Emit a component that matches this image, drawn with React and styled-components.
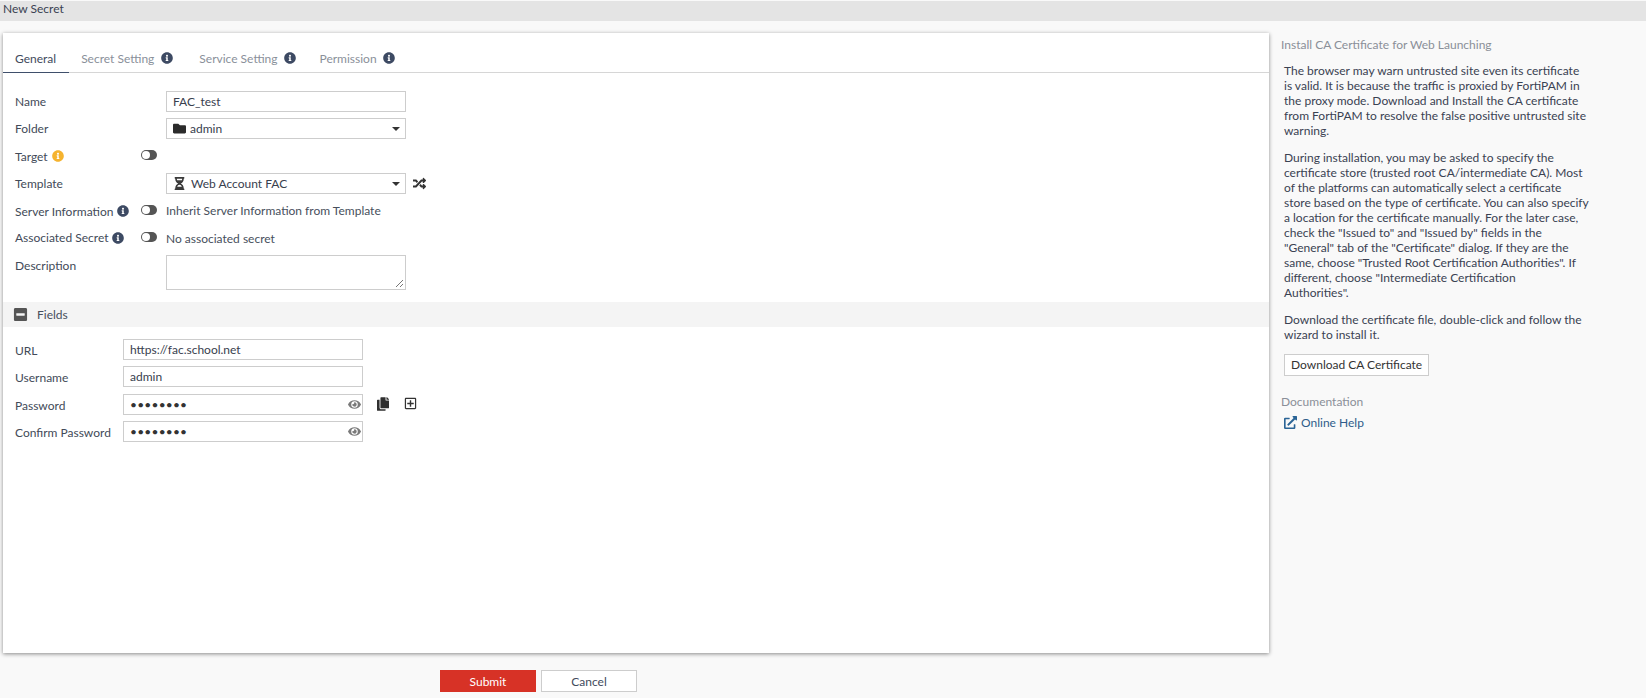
import React from 'react';
import styled, { createGlobalStyle } from 'styled-components';
import {
  FaInfoCircle,
  FaFolder,
  FaHourglassHalf,
  FaRandom,
  FaEye,
  FaCopy,
  FaRegPlusSquare,
  FaMinusSquare,
  FaExternalLinkAlt,
} from 'react-icons/fa';

const GlobalStyle = createGlobalStyle`
  html, body {
    margin: 0;
    padding: 0;
    background: #f9f9f9;
  }
  body {
    font-family: Lato, "Open Sans", sans-serif;
    font-size: 12px;
    color: #303a4b;
  }
`;

const Page = styled.div`
  width: 1646px;
  height: 698px;
  overflow: hidden;
  display: flex;
  flex-direction: column;
`;

const TitleBar = styled.div`
  height: 20px;
  margin-top: 1px;
  padding-left: 3px;
  background: #e4e4e4;
  line-height: 15px;
  color: #3a4252;
  box-sizing: border-box;
`;

const Body = styled.div`
  display: flex;
  padding: 12px 0 0 3px;
`;

const MainColumn = styled.div`
  width: 1266px;
  flex: none;
`;

const Card = styled.div`
  height: 620px;
  background: #fff;
  box-shadow: 0 1px 4px rgba(0, 0, 0, 0.45);
  padding-top: 8px;
  box-sizing: border-box;
`;

const Tabs = styled.div`
  display: flex;
  height: 31px;
  border-bottom: 1px solid #d6d6d6;
  margin-bottom: 18px;
`;

const Tab = styled.div`
  display: flex;
  align-items: center;
  gap: ${p => p.$gap || 6}px;
  height: 32px;
  padding: 2px 12px 0;
  margin-right: ${p => p.$after || 0}px;
  box-sizing: border-box;
  color: #8a909a;
`;

const ActiveTab = styled(Tab)`
  padding-right: 13px;
  color: #3f4a5c;
  box-shadow: inset 0 -1px 0 #3f4f6b;
`;

const InfoIcon = styled(FaInfoCircle)`
  width: 12px;
  height: 12px;
  flex: none;
  color: ${p => p.$color || '#3d4a63'};
`;

const Form = styled.div`
  padding-left: 12px;
`;

const Row = styled.div`
  display: flex;
  height: ${p => p.$height || 27}px;
  align-items: flex-start;
`;

const Label = styled.div`
  width: ${p => p.$width || 126}px;
  flex: none;
  display: flex;
  align-items: center;
  gap: 4px;
  height: 20px;
  padding-top: ${p => p.$top ?? 2}px;
  box-sizing: border-box;
  color: #424a58;
  white-space: nowrap;
`;

const Toggle = styled.div`
  width: 16px;
  height: 10px;
  margin: 5px 9px 0 0;
  border-radius: 5px;
  background: #555;
  flex: none;
  position: relative;
  &::after {
    content: '';
    position: absolute;
    left: 1px;
    top: 1px;
    width: 8px;
    height: 8px;
    border-radius: 50%;
    background: #fff;
  }
`;

const Field = styled.div`
  width: 240px;
  height: ${p => p.$height || 21}px;
  flex: none;
  box-sizing: border-box;
  border: 1px solid #cdcdcd;
  background: #fff;
  display: flex;
  align-items: center;
  gap: 4px;
  padding: 0 5px 0 6px;
  color: #38404e;
  position: relative;
`;

const Caret = styled.span`
  margin-left: auto;
  width: 0;
  height: 0;
  border-left: 4px solid transparent;
  border-right: 4px solid transparent;
  border-top: 4px solid #333;
`;

const FolderIcon = styled(FaFolder)`
  width: 13px;
  height: 13px;
  color: #2b2b2b;
`;

const HourglassIcon = styled(FaHourglassHalf)`
  width: 11px;
  height: 13px;
  margin: 0 2px 0 1px;
  color: #3a3a3a;
`;

const RandomIcon = styled(FaRandom)`
  width: 13px;
  height: 13px;
  margin: 4px 0 0 7px;
  color: #333;
`;

const PlainText = styled.div`
  padding-top: ${p => p.$top || 3}px;
  color: #474f5c;
`;

const ResizeGrip = styled.svg`
  position: absolute;
  right: 1px;
  bottom: 1px;
  width: 9px;
  height: 9px;
`;

const SectionBar = styled.div`
  display: flex;
  align-items: center;
  height: 25px;
  margin: 0 0 12px;
  padding-left: 10px;
  gap: 9px;
  background: #f4f4f4;
  color: #474f5c;
`;

const CollapseIcon = styled(FaMinusSquare)`
  width: 15px;
  height: 15px;
  color: #555;
`;

const Dots = styled.span`
  font-size: 12px;
  letter-spacing: 0.2px;
  color: #333;
`;

const EyeIcon = styled(FaEye)`
  margin-left: auto;
  width: 13px;
  height: 13px;
  margin-right: -4px;
  color: #7a7a7a;
`;

const CopyIcon = styled(FaCopy)`
  width: 12px;
  height: 14px;
  margin: 3px 0 0 14px;
  color: #2f2f2f;
`;

const AddIcon = styled(FaRegPlusSquare)`
  width: 13px;
  height: 13px;
  margin: 3px 0 0 15px;
  color: #333;
`;

const Actions = styled.div`
  display: flex;
  gap: 5px;
  padding: 17px 0 0 437px;
`;

const Button = styled.div`
  width: 96px;
  height: 22px;
  box-sizing: border-box;
  display: flex;
  align-items: center;
  justify-content: center;
  background: ${p => (p.$primary ? '#d73226' : '#fff')};
  color: ${p => (p.$primary ? '#fff' : '#3f4a5c')};
  border: 1px solid ${p => (p.$primary ? '#d73226' : '#cdcdcd')};
`;

const Side = styled.div`
  padding: 4px 0 0 12px;
  width: 300px;
  flex: none;
`;

const SideHeading = styled.div`
  line-height: 15px;
  color: #8a8f98;
  margin-bottom: ${p => p.$gap}px;
`;

const SideBlock = styled.div`
  padding-left: 3px;
  width: 295px;
`;

const Paragraph = styled.p`
  margin: 0 0 12px;
  line-height: 15px;
  color: #3a4252;
  white-space: nowrap;
`;

const DownloadButton = styled.div`
  width: fit-content;
  height: 22px;
  line-height: 20px;
  box-sizing: border-box;
  padding: 0 6px;
  margin-bottom: 18px;
  background: #fff;
  border: 1px solid #cdcdcd;
  color: #333;
`;

const HelpLink = styled.div`
  display: flex;
  align-items: center;
  gap: 4px;
  color: #2f5c8a;
  line-height: 15px;
`;

const ExternalIcon = styled(FaExternalLinkAlt)`
  width: 13px;
  height: 13px;
  color: #2a6496;
`;

const tabs = [
  { name: 'Secret Setting', gap: 7, after: 2 },
  { name: 'Service Setting', gap: 6 },
  { name: 'Permission', gap: 6 },
];

const paragraphs = [
  [
    'The browser may warn untrusted site even its certificate',
    'is valid. It is because the traffic is proxied by FortiPAM in',
    'the proxy mode. Download and Install the CA certificate',
    'from FortiPAM to resolve the false positive untrusted site',
    'warning.',
  ],
  [
    'During installation, you may be asked to specify the',
    'certificate store (trusted root CA/intermediate CA). Most',
    'of the platforms can automatically select a certificate',
    'store based on the type of certificate. You can also specify',
    'a location for the certificate manually. For the later case,',
    'check the "Issued to" and "Issued by" fields in the',
    '"General" tab of the "Certificate" dialog. If they are the',
    'same, choose "Trusted Root Certification Authorities". If',
    'different, choose "Intermediate Certification',
    'Authorities".',
  ],
  [
    'Download the certificate file, double-click and follow the',
    'wizard to install it.',
  ],
];

export default function App() {
  return (
    <Page>
      <GlobalStyle />
      <TitleBar>New Secret</TitleBar>
      <Body>
        <MainColumn>
          <Card>
            <Tabs>
              <ActiveTab>General</ActiveTab>
              {tabs.map(tab => (
                <Tab key={tab.name} $gap={tab.gap} $after={tab.after}>
                  {tab.name}
                  <InfoIcon />
                </Tab>
              ))}
            </Tabs>
            <Form>
              <Row>
                <Label $width={151} $top={1}>Name</Label>
                <Field>FAC_test</Field>
              </Row>
              <Row>
                <Label $width={151} $top={1}>Folder</Label>
                <Field>
                  <FolderIcon />
                  admin
                  <Caret />
                </Field>
              </Row>
              <Row $height={28}>
                <Label>
                  Target
                  <InfoIcon $color="#f5b32f" />
                </Label>
                <Toggle />
              </Row>
              <Row>
                <Label $width={151} $top={1}>Template</Label>
                <Field>
                  <HourglassIcon />
                  Web Account FAC
                  <Caret />
                </Field>
                <RandomIcon />
              </Row>
              <Row>
                <Label>
                  Server Information
                  <InfoIcon />
                </Label>
                <Toggle />
                <PlainText>Inherit Server Information from Template</PlainText>
              </Row>
              <Row $height={28}>
                <Label $top={1}>
                  Associated Secret
                  <InfoIcon />
                </Label>
                <Toggle />
                <PlainText $top={4}>No associated secret</PlainText>
              </Row>
              <Row $height={47}>
                <Label $width={151} $top={1}>Description</Label>
                <Field $height={35}>
                  <ResizeGrip viewBox="0 0 9 9">
                    <path d="M1 8 8 1M5 8 8 5" stroke="#777" strokeWidth="1" fill="none" />
                  </ResizeGrip>
                </Field>
              </Row>
            </Form>
            <SectionBar>
              <CollapseIcon />
              Fields
            </SectionBar>
            <Form>
              <Row>
                <Label $width={108}>URL</Label>
                <Field>https://fac.school.net</Field>
              </Row>
              <Row $height={28}>
                <Label $width={108}>Username</Label>
                <Field>admin</Field>
              </Row>
              <Row>
                <Label $width={108}>Password</Label>
                <Field>
                  <Dots>••••••••</Dots>
                  <EyeIcon />
                </Field>
                <CopyIcon />
                <AddIcon />
              </Row>
              <Row>
                <Label $width={108}>Confirm Password</Label>
                <Field>
                  <Dots>••••••••</Dots>
                  <EyeIcon />
                </Field>
              </Row>
            </Form>
          </Card>
          <Actions>
            <Button $primary>Submit</Button>
            <Button>Cancel</Button>
          </Actions>
        </MainColumn>
        <Side>
          <SideHeading $gap={11}>Install CA Certificate for Web Launching</SideHeading>
          <SideBlock>
            {paragraphs.map(lines => (
              <Paragraph key={lines[0]}>
                {lines.map(line => (
                  <React.Fragment key={line}>
                    {line}
                    <br />
                  </React.Fragment>
                ))}
              </Paragraph>
            ))}
            <DownloadButton>Download CA Certificate</DownloadButton>
          </SideBlock>
          <SideHeading $gap={6}>Documentation</SideHeading>
          <SideBlock>
            <HelpLink>
              <ExternalIcon />
              Online Help
            </HelpLink>
          </SideBlock>
        </Side>
      </Body>
    </Page>
  );
}
